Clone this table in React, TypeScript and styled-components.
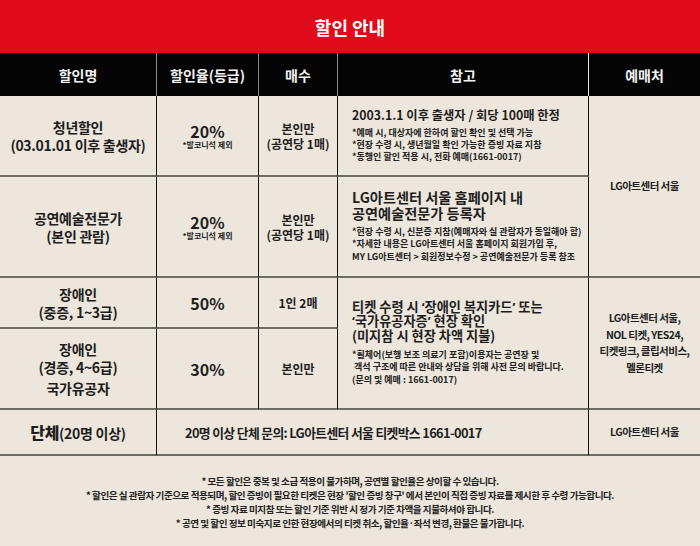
import React from "react";
import styled, { createGlobalStyle } from "styled-components";

const Global = createGlobalStyle`
  html, body { margin: 0; padding: 0; background: #ece6dc; }
  body { font-family: "Noto Sans CJK KR", "Noto Sans", sans-serif; }
  * { box-sizing: border-box; }
`;

const Page = styled.div`
  width: 700px;
  min-height: 546px;
  background: #ece6dc;
  color: #1e1e1e;
  font-family: "Noto Sans CJK KR", "Noto Sans", sans-serif;
  letter-spacing: -0.06em;
`;

const TitleBar = styled.header`
  height: 53px;
  background: #e00a1b;
  color: #fff;
  display: flex;
  align-items: center;
  justify-content: center;
  font-size: 18px;
  font-weight: 700;
  letter-spacing: 0;
`;

const Table = styled.div`
  display: grid;
  grid-template-columns: 157px 102px 79px 251px 111px;
  grid-template-rows: 43px 81px 101px 51px 81px 46px;
`;

const HeadCell = styled.div<{ $sep?: string }>`
  background: #050505;
  color: #f2f2f2;
  font-size: 14px;
  font-weight: 700;
  letter-spacing: 0;
  display: flex;
  align-items: center;
  justify-content: center;
  border-right: ${(p) => (p.$sep ? `1px solid ${p.$sep}` : "none")};
`;

const Cell = styled.div<{
  $col: string;
  $row: string;
  $left?: boolean;
  $last?: boolean;
  $pad?: number;
}>`
  grid-column: ${(p) => p.$col};
  grid-row: ${(p) => p.$row};
  display: flex;
  flex-direction: column;
  justify-content: center;
  align-items: ${(p) => (p.$left ? "flex-start" : "center")};
  text-align: ${(p) => (p.$left ? "left" : "center")};
  padding-left: ${(p) => (p.$pad ? `${p.$pad}px` : "0")};
  border-bottom: 2px solid #6f6b65;
  border-right: ${(p) => (p.$last ? "none" : "1px solid #111")};
  white-space: nowrap;
`;

const Name = styled.div<{ $gap?: number }>`
  font-size: 14px;
  font-weight: 700;
  line-height: 18px;
  letter-spacing: -0.02em;
  margin-top: ${(p) => (p.$gap ? `${p.$gap}px` : "0")};
`;

const Big = styled.span`
  font-size: 16px;
  font-weight: 800;
`;

const Rate = styled.div`
  font-size: 16px;
  font-weight: 700;
  line-height: 18px;
  letter-spacing: 0;
`;

const RateNote = styled.div`
  font-size: 8px;
  font-weight: 700;
  line-height: 10px;
  letter-spacing: 0;
`;

const Qty = styled.div`
  font-size: 12px;
  font-weight: 700;
  line-height: 15px;
  letter-spacing: 0;
`;

const RefTitle = styled.div<{ $size: number; $lh: number }>`
  font-size: ${(p) => p.$size}px;
  font-weight: 700;
  line-height: ${(p) => p.$lh}px;
  letter-spacing: 0;
`;

const Quote = styled.span`
  font-family: "Noto Sans", "Liberation Sans", sans-serif;
`;

const RefNotes = styled.div<{ $gap: number }>`
  margin-top: ${(p) => p.$gap}px;
  font-size: 9px;
  font-weight: 700;
  line-height: 12.3px;
  letter-spacing: 0;
  color: #222;
`;

const Vendor = styled.div`
  font-size: 10.5px;
  font-weight: 700;
  line-height: 16.5px;
  letter-spacing: -0.05em;
`;

const GroupText = styled.div`
  font-size: 12.8px;
  font-weight: 700;
  letter-spacing: -0.05em;
`;

const Notes = styled.div`
  padding-top: 18px;
  display: flex;
  flex-direction: column;
  align-items: center;
  font-size: 9.6px;
  font-weight: 700;
  line-height: 14px;
  letter-spacing: -0.05em;
  color: #222;
`;

export default function App() {
  return (
    <Page>
      <Global />
      <TitleBar>할인 안내</TitleBar>
      <Table>
        <HeadCell $sep="#8a8a8a">할인명</HeadCell>
        <HeadCell $sep="#8a8a8a">할인율(등급)</HeadCell>
        <HeadCell $sep="#8a8a8a">매수</HeadCell>
        <HeadCell $sep="#e8e8e8">참고</HeadCell>
        <HeadCell>예매처</HeadCell>

        {/* 청년할인 */}
        <Cell $col="1" $row="2">
          <Name>청년할인</Name>
          <Name>(03.01.01 이후 출생자)</Name>
        </Cell>
        <Cell $col="2" $row="2">
          <Rate>20%</Rate>
          <RateNote>*발코니석 제외</RateNote>
        </Cell>
        <Cell $col="3" $row="2">
          <Qty>본인만</Qty>
          <Qty>(공연당 1매)</Qty>
        </Cell>
        <Cell $col="4" $row="2" $left $pad={14}>
          <RefTitle $size={12.3} $lh={15}>2003.1.1 이후 출생자 / 회당 100매 한정</RefTitle>
          <RefNotes $gap={4}>
            <div>*예매 시, 대상자에 한하여 할인 확인 및 선택 가능</div>
            <div>*현장 수령 시, 생년월일 확인 가능한 증빙 자료 지참</div>
            <div>*동행인 할인 적용 시, 전화 예매(1661-0017)</div>
          </RefNotes>
        </Cell>
        <Cell $col="5" $row="2 / 4" $last>
          <Vendor>LG아트센터 서울</Vendor>
        </Cell>

        {/* 공연예술전문가 */}
        <Cell $col="1" $row="3">
          <Name>공연예술전문가</Name>
          <Name>(본인 관람)</Name>
        </Cell>
        <Cell $col="2" $row="3">
          <Rate>20%</Rate>
          <RateNote>*발코니석 제외</RateNote>
        </Cell>
        <Cell $col="3" $row="3">
          <Qty>본인만</Qty>
          <Qty>(공연당 1매)</Qty>
        </Cell>
        <Cell $col="4" $row="3" $left $pad={14}>
          <RefTitle $size={14.2} $lh={15.5}>
            LG아트센터 서울 홈페이지 내
            <br />
            공연예술전문가 등록자
          </RefTitle>
          <RefNotes $gap={5}>
            <div>*현장 수령 시, 신분증 지참(예매자와 실 관람자가 동일해야 함)</div>
            <div>*자세한 내용은 LG아트센터 서울 홈페이지 회원가입 후,</div>
            <div>MY LG아트센터 &gt; 회원정보수정 &gt; 공연예술전문가 등록 참조</div>
          </RefNotes>
        </Cell>

        {/* 장애인 중증 */}
        <Cell $col="1" $row="4">
          <Name>장애인</Name>
          <Name>(중증, 1~3급)</Name>
        </Cell>
        <Cell $col="2" $row="4">
          <Rate>50%</Rate>
        </Cell>
        <Cell $col="3" $row="4">
          <Qty>1인 2매</Qty>
        </Cell>
        <Cell $col="4" $row="4 / 6" $left $pad={14}>
          <RefTitle $size={13.2} $lh={13.4}>
            티켓 수령 시 <Quote>‘</Quote>장애인 복지카드<Quote>’</Quote> 또는
            <br />
            <Quote>‘</Quote>국가유공자증<Quote>’</Quote> 현장 확인
            <br />
            (미지참 시 현장 차액 지불)
          </RefTitle>
          <RefNotes $gap={7}>
            <div>*휠체어(보행 보조 의료기 포함)이용자는 공연장 및</div>
            <div>&nbsp;객석 구조에 따른 안내와 상담을 위해 사전 문의 바랍니다.</div>
            <div>(문의 및 예매 : 1661-0017)</div>
          </RefNotes>
        </Cell>
        <Cell $col="5" $row="4 / 6" $last>
          <Vendor>LG아트센터 서울,</Vendor>
          <Vendor>NOL 티켓, YES24,</Vendor>
          <Vendor>티켓링크, 클립서비스,</Vendor>
          <Vendor>멜론티켓</Vendor>
        </Cell>

        {/* 장애인 경증 / 국가유공자 */}
        <Cell $col="1" $row="5">
          <Name>장애인</Name>
          <Name>(경증, 4~6급)</Name>
          <Name $gap={3}>국가유공자</Name>
        </Cell>
        <Cell $col="2" $row="5">
          <Rate>30%</Rate>
        </Cell>
        <Cell $col="3" $row="5">
          <Qty>본인만</Qty>
        </Cell>

        {/* 단체 */}
        <Cell $col="1" $row="6">
          <Name>
            <Big>단체</Big>(20명 이상)
          </Name>
        </Cell>
        <Cell $col="2 / 5" $row="6" $left $pad={28}>
          <GroupText>20명 이상 단체 문의: LG아트센터 서울 티켓박스 1661-0017</GroupText>
        </Cell>
        <Cell $col="5" $row="6" $last>
          <Vendor>LG아트센터 서울</Vendor>
        </Cell>
      </Table>
      <Notes>
        <div>* 모든 할인은 중복 및 소급 적용이 불가하며, 공연별 할인율은 상이할 수 있습니다.</div>
        <div>
          * 할인은 실 관람자 기준으로 적용되며, 할인 증빙이 필요한 티켓은 현장 '할인 증빙 창구' 에서 본인이 직접 증빙 자료를 제시한 후 수령 가능합니다.
        </div>
        <div>* 증빙 자료 미지참 또는 할인 기준 위반 시 정가 기준 차액을 지불하셔야 합니다.</div>
        <div>* 공연 및 할인 정보 미숙지로 인한 현장에서의 티켓 취소, 할인율·좌석 변경, 환불은 불가합니다.</div>
      </Notes>
    </Page>
  );
}
